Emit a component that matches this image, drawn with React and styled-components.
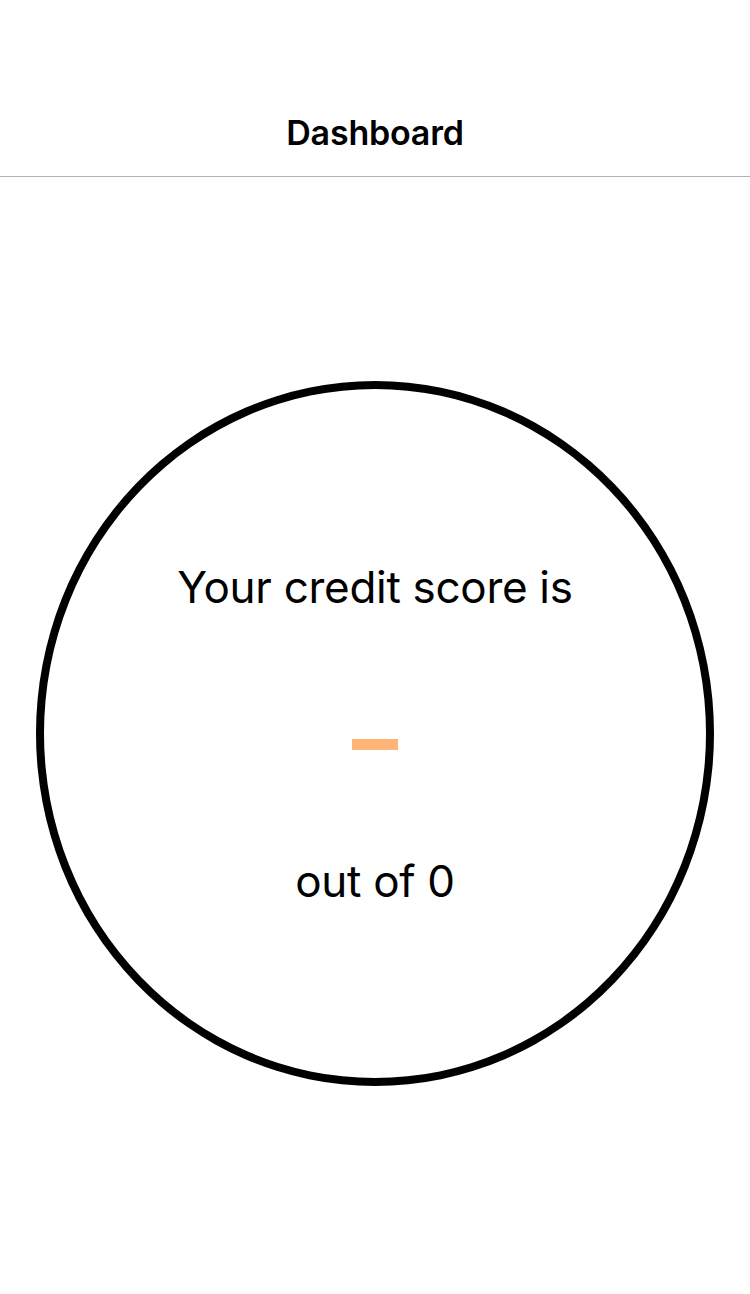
import React from "react";
import styled, { createGlobalStyle } from "styled-components";

const GlobalStyle = createGlobalStyle`
  html, body {
    margin: 0;
    padding: 0;
    background: #ffffff;
    font-family: Inter, "Noto Sans", "Liberation Sans", sans-serif;
    color: #000000;
  }
`;

const Page = styled.div`
  width: 750px;
  min-height: 1294px;
  display: flex;
  flex-direction: column;
`;

const Header = styled.header`
  height: 88px;
  margin-top: 88px;
  display: flex;
  align-items: center;
  justify-content: center;
  border-bottom: 1px solid #b2b2b2;
`;

const Title = styled.h1`
  margin: 0;
  font-size: 34px;
  font-weight: 600;
  letter-spacing: -0.2px;
`;

const Body = styled.main`
  display: flex;
  justify-content: center;
  padding-top: 204px;
`;

const Ring = styled.div`
  width: 678px;
  height: 705px;
  box-sizing: border-box;
  border: 8px solid #000000;
  border-radius: 50%;
  display: flex;
  flex-direction: column;
  align-items: center;
  padding-top: 172px;
`;

const Label = styled.div`
  font-size: 44px;
  line-height: 52px;
  font-weight: 400;
  letter-spacing: -0.3px;
`;

const Score = styled.div`
  width: 46px;
  height: 11px;
  background: #ffb577;
  margin-top: ${(p) => p.gap}px;
  margin-bottom: 105px;
`;

export default function App() {
  return (
    <Page>
      <GlobalStyle />
      <Header>
        <Title>Dashboard</Title>
      </Header>
      <Body>
        <Ring>
          <Label>Your credit score is</Label>
          <Score gap={126} aria-label="–" />
          <Label>out of 0</Label>
        </Ring>
      </Body>
    </Page>
  );
}
